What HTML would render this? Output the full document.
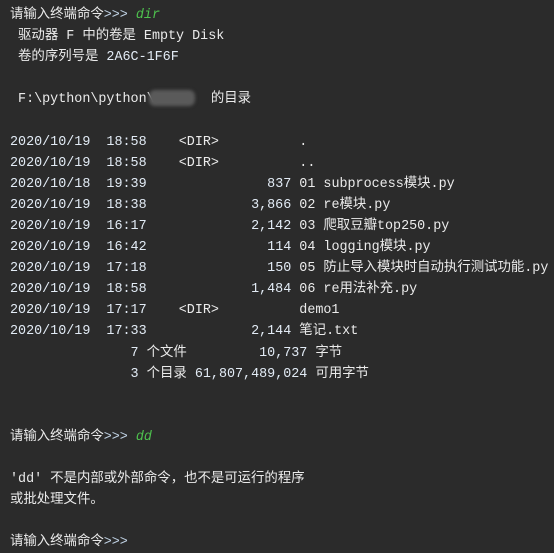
<!DOCTYPE html>
<html><head><meta charset="utf-8"><style>
html,body{margin:0;padding:0;background:#2b2b2b;width:554px;height:551px;overflow:hidden}
#t{position:absolute;left:10px;top:5px;font-family:"Liberation Mono","Noto Sans CJK SC",monospace;font-size:13.4px;color:#ebebeb}
#t div{height:21.1px;line-height:21px;white-space:pre;overflow:visible}
.n{color:#e2ebf5}
.g{color:#4ec24e;font-style:italic}
.p{color:#c0d2e4}
.blur{position:absolute;left:149px;top:90px;width:46px;height:16px;background:#5a5a5a;border-radius:6px;filter:blur(1.5px)}
</style></head><body>
<div id="t">
<div>请输入终端命令<span class="p">&gt;&gt;&gt;</span> <span class="g">dir</span></div>
<div> 驱动器 F 中的卷是 Empty Disk</div>
<div> 卷的序列号是 <span class="n">2A6C-1F6F</span></div>
<div> </div>
<div> F:\python\python\       的目录</div>
<div> </div>
<div><span class="n">2020/10/19  18:58</span>    &lt;DIR&gt;          .</div>
<div><span class="n">2020/10/19  18:58</span>    &lt;DIR&gt;          ..</div>
<div><span class="n">2020/10/18  19:39</span>               <span class="n">837</span> 01 subprocess模块.py</div>
<div><span class="n">2020/10/19  18:38</span>             <span class="n">3,866</span> 02 re模块.py</div>
<div><span class="n">2020/10/19  16:17</span>             <span class="n">2,142</span> 03 爬取豆瓣top250.py</div>
<div><span class="n">2020/10/19  16:42</span>               <span class="n">114</span> 04 logging模块.py</div>
<div><span class="n">2020/10/19  17:18</span>               <span class="n">150</span> 05 防止导入模块时自动执行测试功能.py</div>
<div><span class="n">2020/10/19  18:58</span>             <span class="n">1,484</span> 06 re用法补充.py</div>
<div><span class="n">2020/10/19  17:17</span>    &lt;DIR&gt;          demo1</div>
<div><span class="n">2020/10/19  17:33</span>             <span class="n">2,144</span> 笔记.txt</div>
<div>               <span class="n">7</span> 个文件         <span class="n">10,737</span> 字节</div>
<div>               <span class="n">3</span> 个目录 <span class="n">61,807,489,024</span> 可用字节</div>
<div> </div>
<div> </div>
<div>请输入终端命令<span class="p">&gt;&gt;&gt;</span> <span class="g">dd</span></div>
<div> </div>
<div>'dd' 不是内部或外部命令，也不是可运行的程序</div>
<div>或批处理文件。</div>
<div> </div>
<div>请输入终端命令<span class="p">&gt;&gt;&gt;</span></div>
</div>
<div class="blur"></div>
</body></html>
